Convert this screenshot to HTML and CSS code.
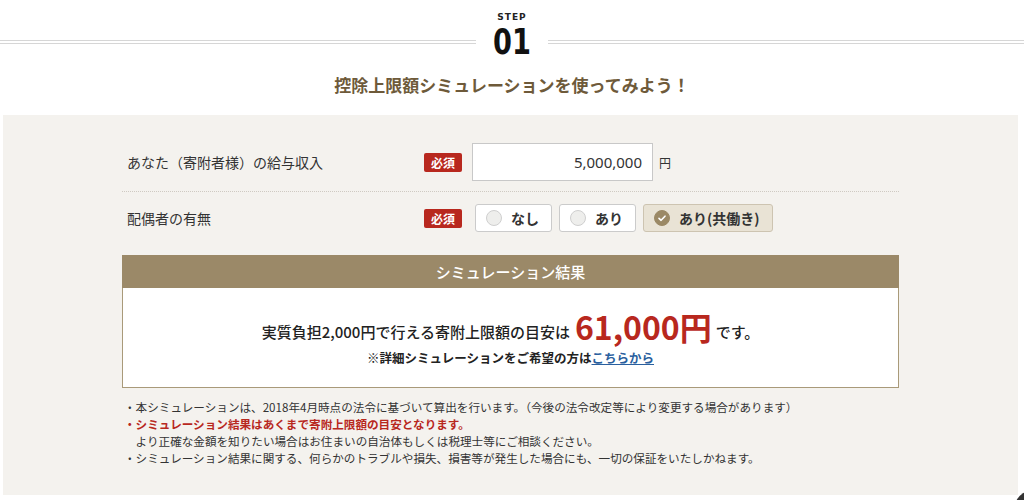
FILE: index.html
```html
<!DOCTYPE html>
<html lang="ja">
<head>
    <meta charset="UTF-8" />
    <meta name="viewport" content="width=device-width, initial-scale=1.0" />
    <title>控除上限額シミュレーション</title>
    <link rel="stylesheet" href="styles.css">
</head>
<body>
    <div class="step-head">
        <p class="step-label">STEP</p>
        <div class="step-row">
            <span class="step-line"></span>
            <span class="step-num">01</span>
            <span class="step-line"></span>
        </div>
    </div>

    <h2 class="lead">控除上限額シミュレーションを使ってみよう！</h2>

    <div class="sim-panel">
        <div class="sim-inner">
            <div class="form-row first">
                <div class="form-label">あなた（寄附者様）の給与収入</div>
                <span class="required">必須</span>
                <input type="text" class="income-input" value="5,000,000">
                <span class="unit">円</span>
            </div>

            <div class="form-row">
                <div class="form-label">配偶者の有無</div>
                <span class="required">必須</span>
                <div class="choices">
                    <label class="choice"><span class="radio"></span>なし</label>
                    <label class="choice"><span class="radio"></span>あり</label>
                    <label class="choice checked">
                        <span class="radio">
                            <svg viewBox="0 0 16 16" width="16" height="16"><path d="M5 8.3 7.1 10.3 11 6.2" fill="none" stroke="#fff" stroke-width="1.6" stroke-linecap="round" stroke-linejoin="round"/></svg>
                        </span>あり(共働き)
                    </label>
                </div>
            </div>

            <div class="result-box">
                <div class="result-head">シミュレーション結果</div>
                <div class="result-body">
                    <p class="result-main">実質負担2,000円で行える寄附上限額の目安は<strong class="amount">61,000円</strong>です。</p>
                    <p class="result-sub">※詳細シミュレーションをご希望の方は<a href="#">こちらから</a></p>
                </div>
            </div>

            <ul class="notes">
                <li>・本シミュレーションは、2018年4月時点の法令に基づいて算出を行います。（今後の法令改定等により変更する場合があります）</li>
                <li><span class="alert">・シミュレーション結果はあくまで寄附上限額の目安となります。</span><br>より正確な金額を知りたい場合はお住まいの自治体もしくは税理士等にご相談ください。</li>
                <li>・シミュレーション結果に関する、何らかのトラブルや損失、損害等が発生した場合にも、一切の保証をいたしかねます。</li>
            </ul>
        </div>
    </div>

    <a href="#" class="page-top"></a>
</body>
</html>
```

FILE: styles.css
```css
* {
    margin: 0;
    padding: 0;
    box-sizing: border-box;
}

body {
    font-family: "Noto Sans CJK JP", "Noto Sans", sans-serif;
    color: #333;
    background: #fff;
    width: 1024px;
    overflow: hidden;
}

/* step heading */
.step-head {
    padding-top: 12px;
    text-align: center;
}

.step-label {
    font-family: "DejaVu Sans", sans-serif;
    font-weight: bold;
    font-size: 9px;
    letter-spacing: 1px;
    line-height: 10px;
    color: #222;
}

.step-row {
    display: flex;
    align-items: center;
    height: 30px;
    margin-top: 5px;
}

.step-line {
    flex: 1;
    height: 4px;
    border-top: 1px solid #d6d6d6;
    border-bottom: 1px solid #d6d6d6;
}

.step-num {
    display: inline-block;
    width: 72px;
    font-family: "DejaVu Sans Condensed", "DejaVu Sans", sans-serif;
    font-weight: bold;
    font-size: 36px;
    line-height: 30px;
    color: #111;
    text-align: center;
    transform: scaleX(0.84);
}

.lead {
    margin-top: 15px;
    text-align: center;
    font-size: 17px;
    font-weight: bold;
    color: #6e5a3a;
    line-height: 26px;
}

/* panel */
.sim-panel {
    margin: 17px 6px 0 3px;
    background: #f4f2ee;
    padding: 28px 0 28px;
}

.sim-inner {
    width: 777px;
    margin: 0 auto;
}

.form-row {
    display: flex;
    align-items: center;
    padding: 12px 0 23px;
}

.form-row.first {
    padding: 0 0 10px;
    border-bottom: 1px dotted #cfcac2;
}

.form-label {
    width: 302px;
    padding-left: 5px;
    font-size: 14px;
    color: #333;
}

.required {
    display: inline-block;
    width: 38px;
    height: 19px;
    line-height: 19px;
    background: #b8281e;
    color: #fff;
    font-size: 12px;
    font-weight: bold;
    text-align: center;
    border-radius: 2px;
}

.income-input {
    margin-left: 10px;
    width: 181px;
    height: 38px;
    border: 1px solid #c8c8c8;
    background: #fff;
    padding: 0 10px;
    text-align: right;
    font-family: "Noto Sans", sans-serif;
    font-size: 15px;
    color: #333;
    outline: none;
}

.unit {
    margin-left: 6px;
    font-size: 12px;
}

.choices {
    display: flex;
    gap: 7px;
    margin-left: 13px;
}

.choice {
    display: flex;
    align-items: center;
    gap: 9px;
    height: 28px;
    padding: 0 12px 0 10px;
    background: #fff;
    border: 1px solid #cbcbcb;
    border-radius: 3px;
    font-size: 14px;
    font-weight: bold;
    color: #333;
}

.choice.checked {
    background: #e9e3d5;
    border-color: #cdc4b1;
}

.radio {
    width: 16px;
    height: 16px;
    border-radius: 50%;
    background: #eeeeec;
    border: 1px solid #cfcfcf;
    display: flex;
}

.choice.checked .radio {
    background: #9b8965;
    border-color: #9b8965;
}

.radio svg {
    margin: -1px;
}

/* result */
.result-box {
    border: 1px solid #a99a79;
    background: #fff;
}

.result-head {
    height: 33px;
    line-height: 33px;
    background: #9b8968;
    color: #fff;
    font-size: 15px;
    font-weight: 500;
    text-align: center;
    margin: -1px -1px 0;
}

.result-body {
    height: 99px;
    padding-top: 21px;
    text-align: center;
}

.result-main {
    font-size: 15px;
    font-weight: 500;
    color: #222;
    line-height: 34px;
}

.amount {
    font-size: 32px;
    color: #b8281e;
    margin: 0 4px 0 5px;
    vertical-align: -2px;
}

.result-sub {
    font-size: 12.5px;
    font-weight: bold;
    color: #222;
    line-height: 18px;
}

.result-sub a {
    color: #2a5f9e;
}

/* notes */
.notes {
    list-style: none;
    margin-top: 11px;
    padding-left: 2px;
    font-size: 11.6px;
    line-height: 17px;
    color: #333;
}

.notes li {
    padding-left: 1em;
    text-indent: -1em;
}

.notes .alert {
    color: #b8281e;
    font-weight: bold;
}

.page-top {
    position: fixed;
    right: -30px;
    bottom: -30px;
    width: 40px;
    height: 40px;
    border-radius: 50%;
    background: #333;
}
```
